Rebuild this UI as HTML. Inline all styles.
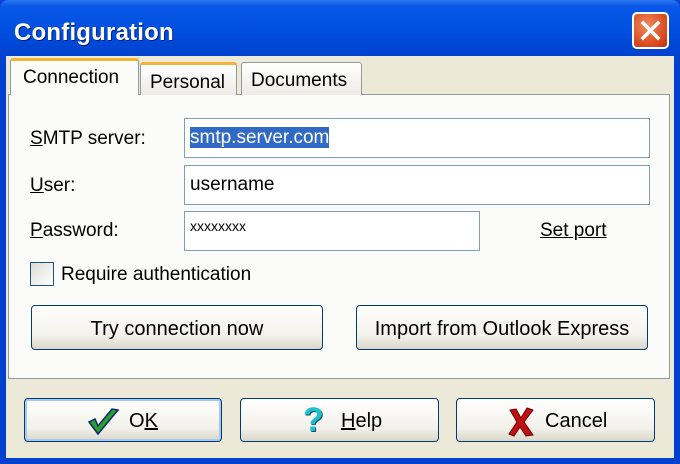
<!DOCTYPE html>
<html><head><style>
*{box-sizing:border-box;margin:0;padding:0}
body{width:680px;height:464px;overflow:hidden;font-family:"Liberation Sans",sans-serif;background:#0a3fd6}
.win{position:absolute;left:0;top:0;width:680px;height:464px;border-radius:8px 8px 0 0;background:linear-gradient(#2a78f0 0,#0a58e8 6px,#0050e0 30px,#0041cf 56px);}
.title{position:absolute;left:14px;top:19px;color:#fff;font-weight:bold;font-size:24px;text-shadow:1px 1px 0 #0a1f7a;letter-spacing:0.2px}
.close{position:absolute;left:632px;top:12px;width:37px;height:37px;border:2px solid #fff;border-radius:5px;background:radial-gradient(circle at 40% 35%,#f08a60,#d8481c 70%,#b83010);}
.body{position:absolute;left:6px;top:56px;width:668px;height:402px;background:#ece9d8}
.panel{position:absolute;left:8px;top:94px;width:662px;height:285px;background:#fbfbfa;border:1px solid #919b9c;}
.tab{position:absolute;top:62px;height:33px;border:1px solid #919b9c;border-bottom:none;border-radius:3px 3px 0 0;background:linear-gradient(#fff,#ecebe5);font-size:19px;padding:7px 0 0 9px;color:#000}
.tab.sel{background:#fbfbfa;top:58px;height:37px;padding-top:6px;z-index:2;border-top:3px solid #f5b33a}
.tab.p{border-top:3px solid #f5b33a}
.lbl{position:absolute;font-size:19px;color:#000}
u{text-decoration:underline}
.in{position:absolute;background:#fff;border:1px solid #7f9db9;font-size:19px;padding:8px 0 0 5px}
.btn{position:absolute;border:1px solid #003c74;border-radius:4px;background:linear-gradient(#fff,#f2f1ea 70%,#dad6c7);font-size:20px;text-align:center;color:#000}
</style></head><body>
<div class="win"></div>
<div class="title">Configuration</div>
<div class="close"><svg width="33" height="33" viewBox="0 0 33 33"><path d="M9 9L24 24M24 9L9 24" stroke="#fff" stroke-width="3.5" stroke-linecap="square"/></svg></div>
<div class="body"></div>
<div class="panel"></div>
<div class="tab sel" style="left:10px;width:129px;padding-left:12px">Connection</div>
<div class="tab p" style="left:140px;width:97px">Personal</div>
<div class="tab" style="left:241px;width:121px">Documents</div>

<div class="lbl" style="left:30px;top:128px"><u>S</u>MTP server:</div>
<div class="lbl" style="left:30px;top:175px"><u>U</u>ser:</div>
<div class="lbl" style="left:30px;top:220px"><u>P</u>assword:</div>
<div class="in" style="left:184px;top:118px;width:466px;height:40px"><span style="background:#316ac5;color:#fff">smtp.server.com</span></div>
<div class="in" style="left:184px;top:165px;width:466px;height:40px">username</div>
<div class="in" style="left:184px;top:211px;width:296px;height:40px;font-size:14px;padding-top:6px">xxxxxxxx</div>
<div class="lbl" style="left:540px;top:220px"><u>Set port</u></div>
<div style="position:absolute;left:30px;top:262px;width:24px;height:24px;border:1px solid #1c5180;background:linear-gradient(135deg,#dcdcd6,#fff)"></div>
<div class="lbl" style="left:61px;top:264px">Require authentication</div>
<div class="btn" style="left:31px;top:305px;width:292px;height:45px;padding-top:12px">Try connection now</div>
<div class="btn" style="left:356px;top:305px;width:292px;height:45px;padding-top:12px">Import from Outlook Express</div>

<div class="btn" style="left:24px;top:398px;width:198px;height:44px;padding-top:11px;box-shadow:inset 0 0 0 2px #a8c8f0"><svg width="34" height="30" viewBox="0 0 34 30" style="position:absolute;left:62px;top:8px"><path d="M2 15L11 27L31 3L25 2L11 19L8 12Z" fill="#2aa02a" stroke="#0a2a70" stroke-width="1.5"/></svg><span style="position:absolute;left:104px;top:11px">O<u>K</u></span></div>
<div class="btn" style="left:240px;top:398px;width:199px;height:44px"><span style="position:absolute;left:62px;top:2px;font-size:34px;font-weight:bold;color:#20c0d0;text-shadow:1px 1px 0 #105060">?</span><span style="position:absolute;left:100px;top:11px"><u>H</u>elp</span></div>
<div class="btn" style="left:456px;top:398px;width:199px;height:44px"><svg width="28" height="30" viewBox="0 0 28 30" style="position:absolute;left:50px;top:8px"><path d="M3 3L9 2L14 11L20 1L26 3L17 15L26 28L19 29L13 20L7 29L2 27L10 15Z" fill="#c01010" stroke="#600" stroke-width="1"/></svg><span style="position:absolute;left:88px;top:11px">Cancel</span></div>
</body></html>
